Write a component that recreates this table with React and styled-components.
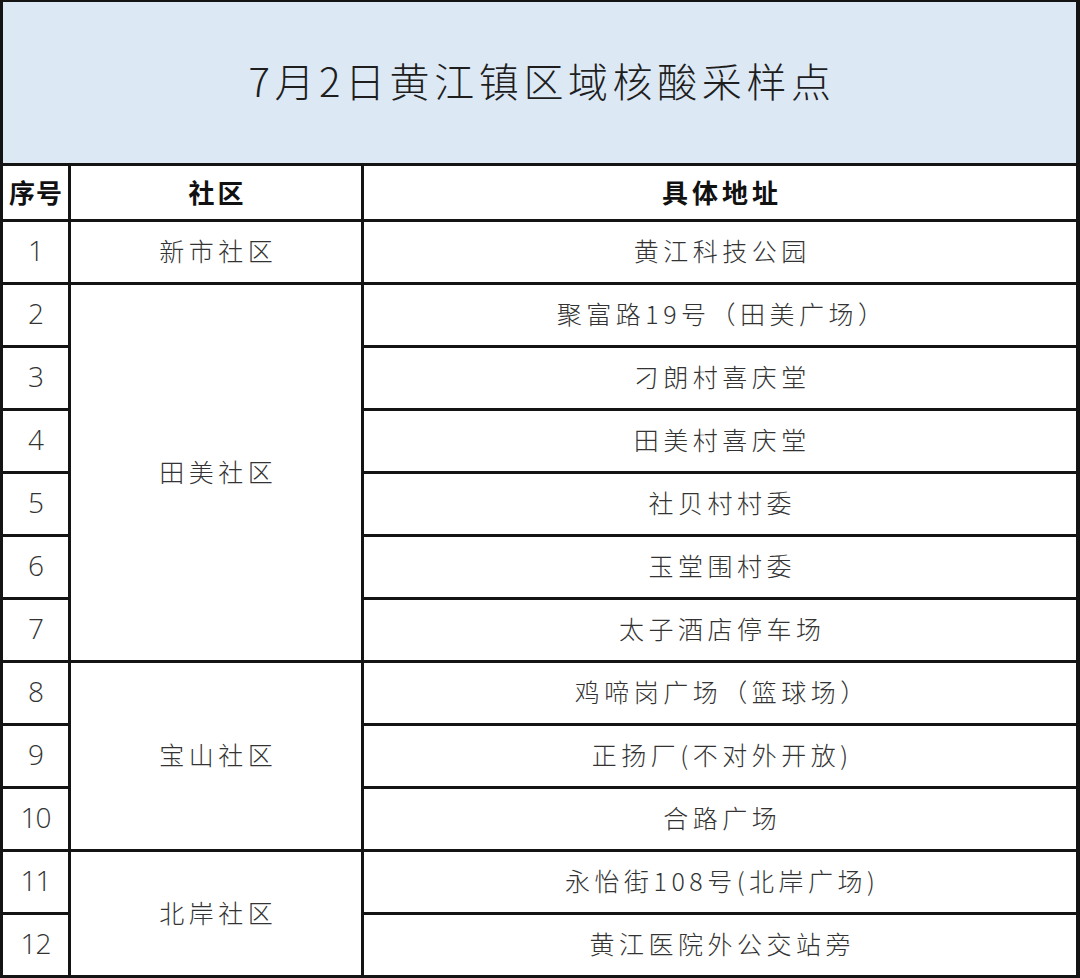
import styled, { createGlobalStyle } from "styled-components";

const Global = createGlobalStyle`
  html, body { margin: 0; padding: 0; background: #fff; }
  body { font-family: "Noto Sans CJK SC", "Noto Sans", sans-serif; }
`;

const Sheet = styled.div`
  width: 1080px;
  height: 978px;
  box-sizing: border-box;
  background: #141414;
  padding: 2px 4px 3px 3px;
  display: grid;
  grid-template-columns: 65px 290px 1fr;
  grid-template-rows: 161px 53px repeat(12, 60px);
  gap: 3px;
`;

const Title = styled.div`
  grid-column: 1 / 4;
  background: #dce8f4;
  display: flex;
  align-items: center;
  justify-content: center;
  font-size: 40px;
  font-weight: 300;
  letter-spacing: 4.6px;
  padding-left: 5px;
  padding-bottom: 6px;
  color: #1e1e1e;
`;

const Head = styled.div`
  background: #fff;
  display: flex;
  align-items: center;
  justify-content: center;
  font-size: 26px;
  font-weight: 700;
  color: #111;
  letter-spacing: ${(p) => p.$ls || 3}px;
  padding-left: ${(p) => p.$ls || 3}px;
  padding-bottom: 2px;
`;

const Cell = styled.div`
  background: #fff;
  display: flex;
  align-items: center;
  justify-content: center;
  font-size: 25px;
  font-weight: 300;
  color: #333;
  letter-spacing: 4.5px;
  padding-left: 4.5px;
  padding-bottom: 4px;
`;

const Num = styled(Cell)`
  font-family: "Open Sans", "Liberation Sans", sans-serif;
  font-size: 28px;
  font-weight: 300;
  letter-spacing: -1px;
  padding-left: 0;
  color: #333;
`;

const rows = [
  ["黄江科技公园", "新市社区", 1],
  ["聚富路19号（田美广场）", "田美社区", 6],
  ["刁朗村喜庆堂"],
  ["田美村喜庆堂"],
  ["社贝村村委"],
  ["玉堂围村委"],
  ["太子酒店停车场"],
  ["鸡啼岗广场（篮球场）", "宝山社区", 3],
  ["正扬厂(不对外开放)"],
  ["合路广场"],
  ["永怡街108号(北岸广场)", "北岸社区", 2],
  ["黄江医院外公交站旁"],
];

export default function App() {
  return (
    <>
      <Global />
      <Sheet>
        <Title>7月2日黄江镇区域核酸采样点</Title>
        <Head $ls={1}>序号</Head>
        <Head>社区</Head>
        <Head $ls={4}>具体地址</Head>
        {rows.map(([addr, community, span], i) => (
          <Row key={i} n={i + 1} addr={addr} community={community} span={span} />
        ))}
      </Sheet>
    </>
  );
}

function Row({ n, addr, community, span }) {
  const line = n + 2;
  return (
    <>
      <Num style={{ gridRow: line, gridColumn: 1 }}>{n}</Num>
      {community && (
        <Cell style={{ gridRow: `${line} / span ${span}`, gridColumn: 2 }}>{community}</Cell>
      )}
      <Cell style={{ gridRow: line, gridColumn: 3 }}>{addr}</Cell>
    </>
  );
}
